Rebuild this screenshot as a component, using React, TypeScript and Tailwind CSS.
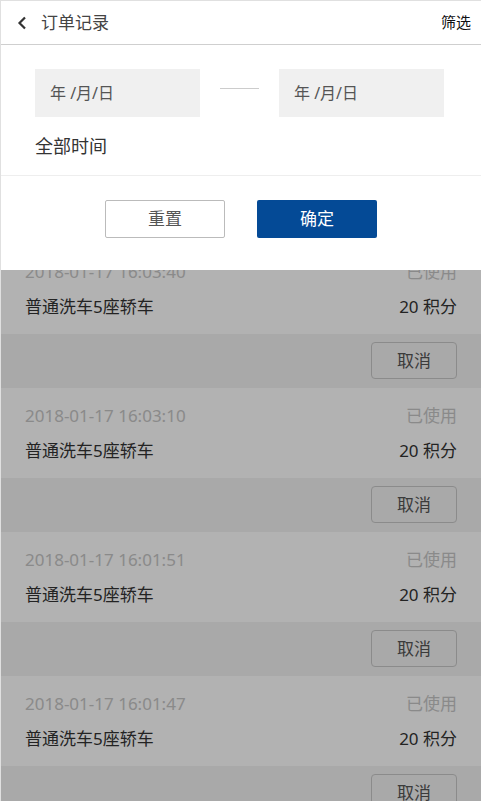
import React from "react";

interface Order {
  id: number;
  time: string;
  name: string;
  points: number;
  status: string;
}

const orders: Order[] = [
  { id: 1, time: "2018-01-17 16:03:40", name: "普通洗车5座轿车", points: 20, status: "已使用" },
  { id: 2, time: "2018-01-17 16:03:10", name: "普通洗车5座轿车", points: 20, status: "已使用" },
  { id: 3, time: "2018-01-17 16:01:51", name: "普通洗车5座轿车", points: 20, status: "已使用" },
  { id: 4, time: "2018-01-17 16:01:47", name: "普通洗车5座轿车", points: 20, status: "已使用" },
];

const font = { fontFamily: '"Noto Sans", "Noto Sans CJK SC", sans-serif' };

function OrderItem({ order }: { order: Order }) {
  return (
    <div>
      {/* info */}
      <div className="h-[90px] bg-white pl-[24px] pr-[24px] pt-[14px]">
        <div className="flex justify-between items-center h-[28px] text-[17px] text-[#c6c6c6]">
          <span>{order.time}</span>
          <span>{order.status}</span>
        </div>
        <div className="flex justify-between items-center h-[28px] mt-[7px] text-[17px] text-[#333]">
          <span>{order.name}</span>
          <span>{order.points} 积分</span>
        </div>
      </div>
      {/* actions */}
      <div className="h-[54px] bg-[#f2f2f2] flex justify-end items-start pt-[8px] pr-[24px]">
        <button className="w-[86px] h-[37px] rounded-[4px] border border-[#c8c8c8] text-[17px] text-[#555] bg-transparent">
          取消
        </button>
      </div>
    </div>
  );
}

export default function App() {
  return (
    <div className="relative w-full h-[801px] overflow-hidden bg-white border-l border-t border-[#e0e0e0]" style={font}>
      {/* header */}
      <div className="h-[44px] flex items-center justify-between border-b border-[#cfcfcf] pl-[16px] pr-[10px]">
        <div className="flex items-center">
          <svg width="10" height="14" viewBox="0 0 10 14" className="mr-[14px]">
            <path d="M8 1.5 L2.5 7 L8 12.5" fill="none" stroke="#333" strokeWidth="2.2" />
          </svg>
          <span className="text-[17px] text-[#444]">订单记录</span>
        </div>
        <span className="text-[15px] text-[#111]">筛选</span>
      </div>

      {/* list */}
      <div className="pt-[199px]">
        {orders.map((o) => (
          <OrderItem key={o.id} order={o} />
        ))}
      </div>

      {/* mask */}
      <div className="absolute left-0 right-0 bottom-0 top-[44px] bg-black/30" />

      {/* filter panel */}
      <div className="absolute left-0 right-0 top-[44px] bg-white">
        <div className="pl-[34px] pr-[36px] pt-[24px] h-[131px] border-b border-[#eeeeee]">
          <div className="flex items-start">
            <div className="w-[165px] h-[48px] bg-[#f0f0f0] flex items-center pl-[15px] text-[16px] text-[#555]">
              年 /月/日
            </div>
            <div className="w-[39px] h-px bg-[#cccccc] mx-[20px] mt-[19px]" />
            <div className="w-[165px] h-[48px] bg-[#f0f0f0] flex items-center pl-[15px] text-[16px] text-[#555]">
              年 /月/日
            </div>
          </div>
          <div className="mt-[16px] text-[18px] text-[#333]">全部时间</div>
        </div>
        <div className="flex justify-center gap-[32px] pt-[24px] pb-[32px]">
          <button className="w-[120px] h-[38px] rounded-[2px] border border-[#bbbbbb] bg-white text-[17px] text-[#555]">
            重置
          </button>
          <button className="w-[120px] h-[38px] rounded-[2px] bg-[#044a96] text-[17px] text-white">
            确定
          </button>
        </div>
      </div>
    </div>
  );
}
